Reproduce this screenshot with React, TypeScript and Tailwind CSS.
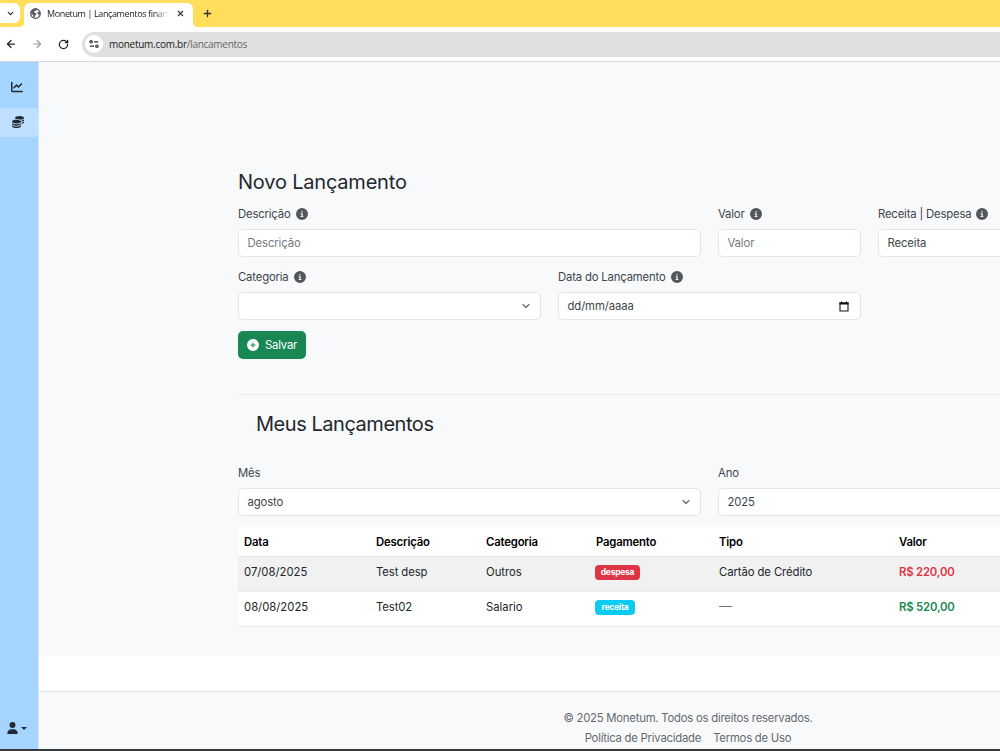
import type { ReactNode } from "react";
import { FaChartLine, FaCircleInfo, FaCirclePlus, FaCoins, FaUser } from "react-icons/fa6";
import { ArrowLeft, ArrowRight, ChevronDown, Plus, RotateCw, X } from "lucide-react";

const rows = [
  {
    date: "07/08/2025",
    description: "Test desp",
    category: "Outros",
    payment: "despesa",
    badge: "bg-[#dc3545] w-[45px]",
    type: "Cartão de Crédito",
    typeColor: "text-[#212529] tracking-[-0.08px]",
    value: "R$ 220,00",
    valueColor: "text-[#dc3545]",
  },
  {
    date: "08/08/2025",
    description: "Test02",
    category: "Salario",
    payment: "receita",
    badge: "bg-[#0dcaf0] w-10",
    type: "—",
    typeColor: "text-[#6c757d] text-[13px]",
    value: "R$ 520,00",
    valueColor: "text-[#198754]",
  },
];

function BrowserBar() {
  return (
    <header className="shrink-0 font-['Open_Sans','Noto_Sans',sans-serif]">
      {/* Tabs */}
      <div className="flex h-[27px] bg-[#ffde5c]">
        <div className="mt-[3px] flex h-5 w-5 items-center justify-center rounded-r-md bg-white">
          <ChevronDown size={9} strokeWidth={3} className="text-[#222]" />
        </div>
        <div className="relative ml-1 mt-[3px] flex h-6 w-[169px] items-center rounded-t-md bg-white pl-1.5">
          <span className="absolute -left-1 bottom-0 h-1 w-1 bg-[radial-gradient(circle_at_0_0,#ffde5c_3.5px,white_4px)]" />
          <span className="absolute -right-1 bottom-0 h-1 w-1 bg-[radial-gradient(circle_at_100%_0,#ffde5c_3.5px,white_4px)]" />
          <svg viewBox="0 0 12 12" className="-mt-1 h-[11px] w-[11px] shrink-0">
            <circle cx="6" cy="6" r="5.2" fill="white" stroke="#55595e" strokeWidth="1.4" />
            <path
              d="M1 5.5 L1.8 2.8 4.5 1 7.5 1.2 6.8 3 4.8 3.3 4.6 5 6.6 5.7 7 7.3 5.4 8.3 5.2 10.8 3.8 9.9 3.6 7.8Z M8 3.8 L10.6 4.3 11 6.2 9.2 7.7 8.4 6.2Z"
              fill="#55595e"
            />
          </svg>
          <span className="-mt-0.5 ml-1.5 w-[122px] whitespace-nowrap text-[9px] tracking-[-0.38px] text-[#222] [mask-image:linear-gradient(to_right,black_88%,transparent)]">
            Monetum | Lançamentos financ
          </span>
          <X size={9} strokeWidth={3} className="-mt-1 ml-[7px] shrink-0 text-[#333]" />
        </div>
        <Plus size={11} strokeWidth={2.8} className="ml-[9px] mt-2 text-[#333]" />
      </div>

      {/* Address bar */}
      <div className="flex h-[35px] items-center border-b border-[#d5d6d8] bg-white pl-[5px]">
        <ArrowLeft size={12} strokeWidth={2.5} className="text-[#222]" />
        <ArrowRight size={12} strokeWidth={2.2} className="ml-[14px] text-[#9a9a9a]" />
        <RotateCw size={11} strokeWidth={2.8} className="ml-[15px] text-[#222]" />
        <div className="ml-[13px] flex h-[25px] flex-1 items-center rounded-l-full bg-[#e0e0e0] pl-[3px]">
          <span className="flex h-[18px] w-[18px] items-center justify-center rounded-full bg-white">
            <svg viewBox="0 0 10 10" className="h-2.5 w-2.5" fill="none" stroke="#333" strokeWidth="1.2">
              <circle cx="2.1" cy="2.8" r="1.2" />
              <path d="M5 2.8H9.2M.8 7.2H5" />
              <circle cx="7.9" cy="7.2" r="1.2" />
            </svg>
          </span>
          <span className="ml-[6px] text-[10px] tracking-[-0.27px] text-[#222]">
            monetum.com.br<span className="text-[#666]">/lancamentos</span>
          </span>
        </div>
      </div>
    </header>
  );
}

function Sidebar() {
  return (
    <aside className="flex w-[39px] shrink-0 flex-col border-r border-[#cfe6fb] bg-[#a5d5ff] text-[#212936]">
      <div className="mt-[10px] flex h-[29px] items-center pl-[11px]">
        <FaChartLine size={12} />
      </div>
      <div className="mt-[7px] flex h-[29px] items-center rounded-r bg-[#bfe1ff] pb-0.5 pl-3">
        <FaCoins size={12} />
      </div>
      <div className="mb-[15px] mt-auto flex items-center gap-[3px] pl-[7px]">
        <FaUser size={12} className="w-[11px]" />
        <svg viewBox="0 0 6 3" className="h-[3px] w-1.5">
          <path d="M0 0h6L3 3z" fill="currentColor" />
        </svg>
      </div>
    </aside>
  );
}

function Label({ children, info = true }: { children: ReactNode; info?: boolean }) {
  return (
    <div className="flex h-[18px] items-center gap-[5px] whitespace-nowrap tracking-[-0.16px] text-[#40454a]">
      <span className="pt-[1.5px]">{children}</span>
      {info && <FaCircleInfo size={12} className="shrink-0 text-[#53575b]" />}
    </div>
  );
}

function Field({ children, select = false }: { children?: ReactNode; select?: boolean }) {
  return (
    <div className="mt-[6px] flex h-7 items-center justify-between rounded-[5px] border border-[#e2e5e9] bg-white pl-[8.5px] pr-2 tracking-[-0.1px] text-[#40454a]">
      <span>{children}</span>
      {select && <ChevronDown size={12} strokeWidth={2.4} className="text-[#646a70]" />}
    </div>
  );
}

function EntryForm() {
  return (
    <section className="h-[333px] border-b border-[#e8eaed] pt-[106px]">
      <h2 className="h-[30px] text-[20px] leading-[28px] tracking-[-0.2px] text-[#24282c]">Novo Lançamento</h2>
      <div className="mt-[7px] flex gap-[17px]">
        <div className="w-[463px] shrink-0">
          <Label>Descrição</Label>
          <Field>
            <span className="text-[#74797e]">Descrição</span>
          </Field>
        </div>
        <div className="w-[143px] shrink-0">
          <Label>Valor</Label>
          <Field>
            <span className="text-[#74797e]">Valor</span>
          </Field>
        </div>
        <div className="w-[303px] shrink-0">
          <Label>Receita | Despesa</Label>
          <Field select>Receita</Field>
        </div>
      </div>
      <div className="mt-[11px] flex gap-[17px]">
        <div className="w-[303px] shrink-0">
          <Label>Categoria</Label>
          <Field select />
        </div>
        <div className="w-[303px] shrink-0">
          <Label>Data do Lançamento</Label>
          <div className="mt-[6px] flex h-7 items-center justify-between rounded-[5px] border border-[#e2e5e9] bg-white pl-[8.5px] pr-[11px] tracking-[-0.1px] text-[#40454a]">
            <span>dd/mm/aaaa</span>
            <svg viewBox="0 0 10 11" className="h-[11px] w-2.5">
              <path d="M1 2h8v8H1z" fill="none" stroke="#111" strokeWidth="1.1" />
              <path d="M.5 1.5h9V3.5h-9zM2 .4h1v1.4H2zM7 .4h1v1.4H7z" fill="#111" />
            </svg>
          </div>
        </div>
      </div>
      <button className="mt-[11px] flex h-7 w-[68px] items-center gap-1.5 rounded-[5px] bg-[#198754] pl-[9px] tracking-[-0.2px] text-white">
        <FaCirclePlus size={12} />
        Salvar
      </button>
    </section>
  );
}

function Entries() {
  return (
    <section>
      <h2 className="ml-[18px] mt-[14px] h-[30px] text-[20px] leading-[30px] tracking-[-0.46px] text-[#24282c]">
        Meus Lançamentos
      </h2>
      <div className="mt-[25px] flex gap-[17px]">
        <div className="w-[463px] shrink-0">
          <Label info={false}>Mês</Label>
          <Field select>agosto</Field>
        </div>
        <div className="w-[463px] shrink-0">
          <Label info={false}>Ano</Label>
          <Field select>2025</Field>
        </div>
      </div>
      <table className="mt-[11px] w-[943px] table-fixed border-collapse bg-white text-left text-[#212529]">
        <colgroup>
          <col className="w-[132px]" />
          <col className="w-[110px]" />
          <col className="w-[110px]" />
          <col className="w-[123px]" />
          <col className="w-[180px]" />
          <col />
        </colgroup>
        <thead>
          <tr className="h-[29px] border-b border-[#e9ebed] text-black">
            {["Data", "Descrição", "Categoria", "Pagamento", "Tipo", "Valor"].map((title) => (
              <th key={title} className="p-0 pl-1.5 pt-[2px] font-semibold tracking-[-0.16px]">
                {title}
              </th>
            ))}
          </tr>
        </thead>
        <tbody>
          {rows.map((row) => (
            <tr key={row.date} className="h-[35px] border-b border-[#e9ebed] odd:bg-[#f1f1f1]">
              <td className="p-0 pb-[3px] pl-1.5">{row.date}</td>
              <td className="p-0 pb-[3px] pl-1.5 tracking-[-0.1px]">{row.description}</td>
              <td className="p-0 pb-[3px] pl-1.5">{row.category}</td>
              <td className="p-0 pb-[2px] pl-[5px]">
                <span
                  className={`flex h-[15px] items-center justify-center rounded text-[8.5px] font-bold tracking-[-0.25px] text-white ${row.badge}`}
                >
                  {row.payment}
                </span>
              </td>
              <td className={`p-0 pb-[3px] pl-1.5 ${row.typeColor}`}>{row.type}</td>
              <td className={`p-0 pb-[3px] pl-1.5 font-semibold tracking-[-0.16px] ${row.valueColor}`}>{row.value}</td>
            </tr>
          ))}
        </tbody>
      </table>
    </section>
  );
}

export default function App() {
  return (
    <div className="flex h-[751px] w-[1000px] flex-col overflow-hidden border-b-2 border-[#393939] bg-white font-['Inter',sans-serif] text-[11.3px]">
      <BrowserBar />
      <div className="flex min-h-0 flex-1">
        <Sidebar />
        <div className="flex min-w-0 flex-1 flex-col overflow-hidden">
          <main className="h-[594px] shrink-0 bg-[#f8f9fb] pl-[199px]">
            <EntryForm />
            <Entries />
          </main>
          <footer className="mt-[35px] flex-1 border-t border-[#e2e5e8] bg-[#f8f9fb] pl-[168px] pt-4 text-[#65696e]">
            <div className="w-[962px] text-center leading-[20px] tracking-[-0.22px]">
              <p>© 2025 Monetum. Todos os direitos reservados.</p>
              <p className="flex justify-center gap-3">
                <a href="#">Política de Privacidade</a>
                <a href="#">Termos de Uso</a>
              </p>
            </div>
          </footer>
        </div>
      </div>
    </div>
  );
}
